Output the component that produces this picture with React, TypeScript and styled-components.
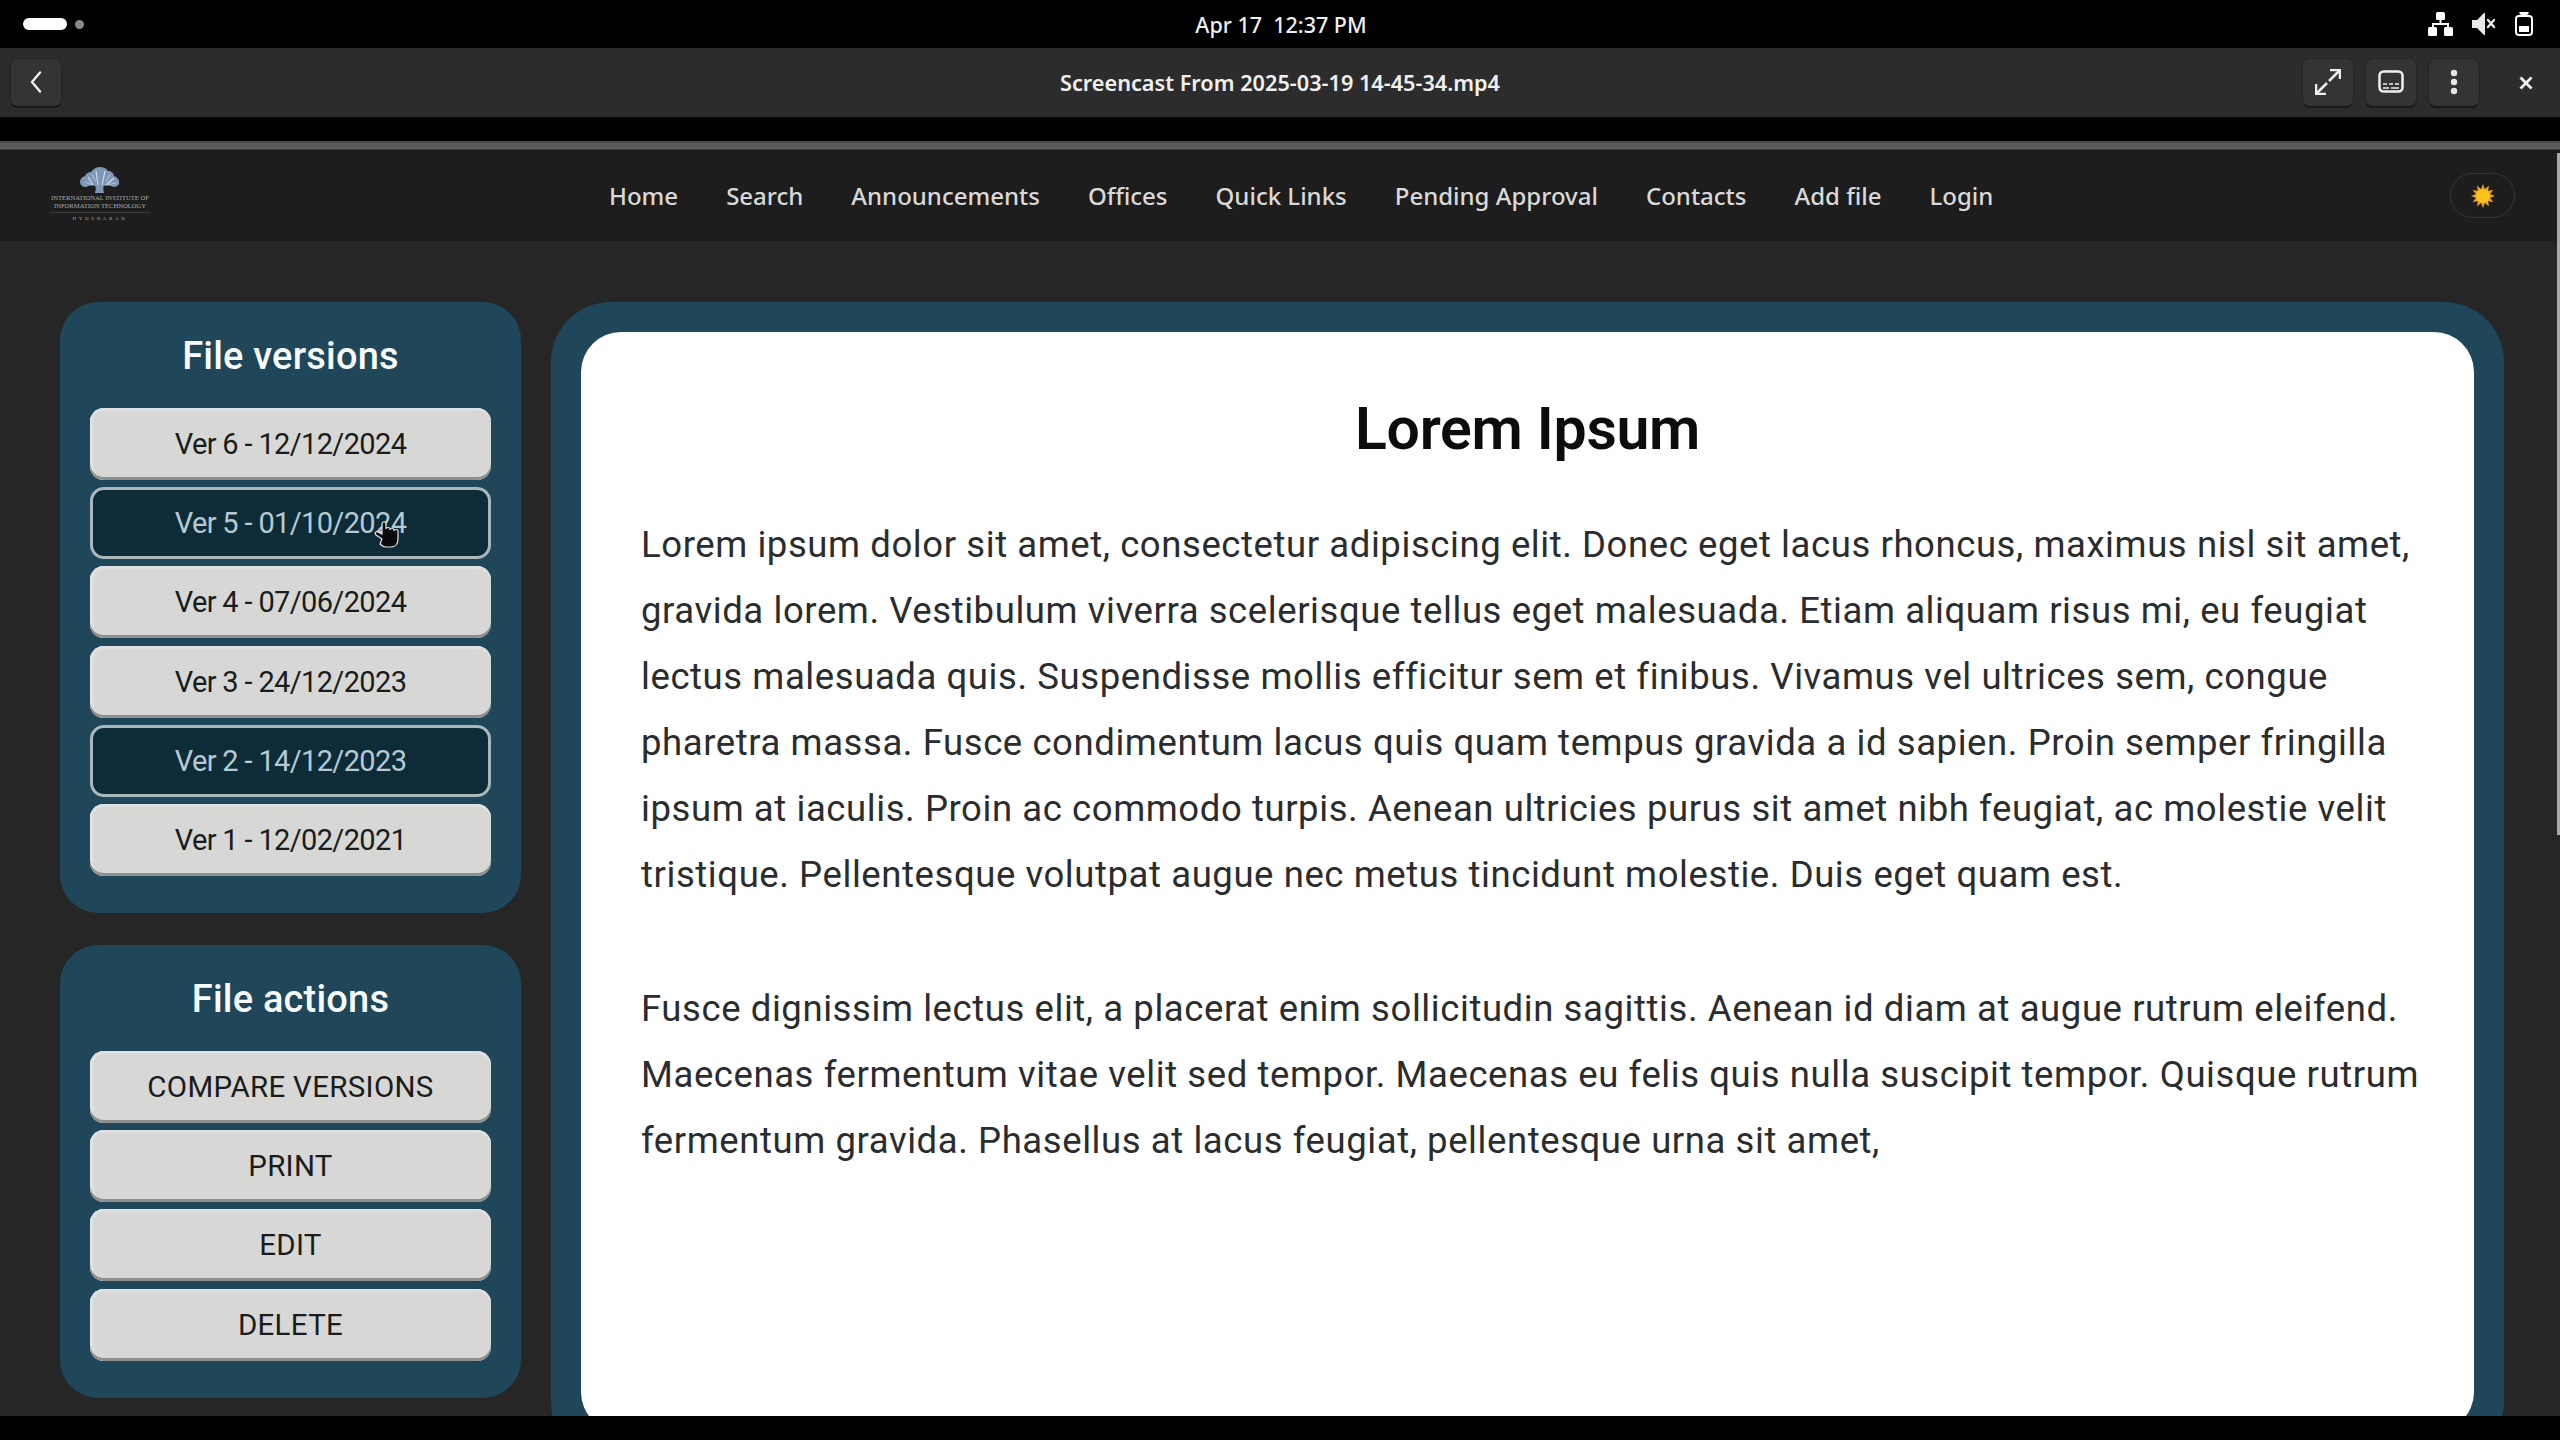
import styled, { createGlobalStyle } from 'styled-components';

const GlobalStyle = createGlobalStyle`
  html, body {
    margin: 0;
    padding: 0;
    background: #000;
  }
  * {
    box-sizing: border-box;
  }
`;

const Screen = styled.div`
  width: 2560px;
  height: 1440px;
  display: flex;
  flex-direction: column;
  overflow: hidden;
  position: relative;
  background: #000;
  font-family: Roboto, sans-serif;
`;

const TopBar = styled.div`
  height: 48px;
  flex: none;
  background: #000;
  display: grid;
  grid-template-columns: 1fr auto 1fr;
  align-items: center;
  padding: 0 23px;
  color: #efefef;
`;

const Activities = styled.div`
  display: flex;
  align-items: center;
`;

const Pill = styled.div`
  width: 44px;
  height: 12px;
  border-radius: 6px;
  background: #fff;
`;

const Dot = styled.div`
  width: 9px;
  height: 9px;
  border-radius: 50%;
  margin-left: 8px;
  background: #8a8a8a;
`;

const Clock = styled.div`
  font-family: 'Noto Sans', sans-serif;
  font-size: 21.5px;
  font-weight: 500;
  white-space: pre;
  margin-left: 2px;
`;

const Tray = styled.div`
  display: flex;
  align-items: center;
  justify-content: flex-end;
  gap: 19px;
  padding-right: 4px;
`;

const TitleBar = styled.div`
  height: 69px;
  flex: none;
  background: #2c2c2c;
  display: grid;
  grid-template-columns: 1fr auto 1fr;
  align-items: center;
  padding: 0 10px;
`;

const IconButton = styled.div`
  width: 52px;
  height: 50px;
  border-radius: 8px;
  background: #343434;
  border: 1px solid #262626;
  border-bottom: 2px solid #191919;
  display: flex;
  align-items: center;
  justify-content: center;
  flex: none;
`;

const VideoTitle = styled.div`
  color: #f0f0f0;
  font-family: 'Noto Sans', sans-serif;
  font-size: 21.7px;
  font-weight: 600;
`;

const ActionGroup = styled.div`
  display: flex;
  gap: 11px;
  align-items: center;
  justify-content: flex-end;
`;

const CloseWrap = styled.div`
  width: 22px;
  margin: 0 13px 0 24px;
  display: flex;
  justify-content: center;
`;

const Spacer = styled.div`
  height: 24px;
  flex: none;
  background: #000;
`;

const Progress = styled.div`
  height: 9px;
  flex: none;
  background: #5b5b5b;
  border-top: 2px solid #4a4a4a;
  border-bottom: 1px solid #3c3c3c;
`;

const NavBar = styled.nav`
  height: 91px;
  flex: none;
  background: #1c1d1c;
  display: flex;
  align-items: center;
  padding: 0 45px 0 50px;
`;

const Logo = styled.div`
  width: 100px;
  display: flex;
  flex-direction: column;
  align-items: center;
  color: #a9acae;
  font-family: 'Liberation Serif', serif;
  font-size: 6.6px;
  line-height: 8px;
  white-space: nowrap;
  text-align: center;
  margin-top: -3px;
`;

const LogoRule = styled.div`
  width: 100%;
  height: 1px;
  background: #3a3c3c;
  margin: 2px 0 3px;
`;

const LogoCity = styled.div`
  font-size: 5px;
  line-height: 6px;
  letter-spacing: 2.6px;
`;

const NavLinks = styled.div`
  display: flex;
  gap: 48px;
  margin-left: 459px;
`;

const NavLink = styled.a`
  color: #d9d9d9;
  font-family: 'Noto Sans', sans-serif;
  font-size: 24px;
  font-weight: 500;
  line-height: 34px;
`;

const ThemeToggle = styled.div`
  margin-left: auto;
  width: 65px;
  height: 45px;
  border-radius: 23px;
  border: 1px solid #343635;
  display: flex;
  align-items: center;
  justify-content: center;
`;

const Page = styled.div`
  flex: 1;
  min-height: 0;
  background: #252625;
  display: grid;
  grid-template-columns: 461px 1953px;
  column-gap: 30px;
  align-items: start;
  padding: 61px 0 0 60px;
  overflow: hidden;
`;

const Sidebar = styled.aside`
  display: flex;
  flex-direction: column;
  gap: 32px;
`;

const Panel = styled.section`
  background: #20465a;
  border-radius: 38px;
  padding: 0 30px 37px;
`;

const PanelTitle = styled.h2`
  margin: 0;
  height: 106px;
  line-height: 109px;
  text-align: center;
  color: #f7fbfc;
  font-size: 38px;
  font-weight: 500;
  letter-spacing: 0.2px;
`;

const ButtonList = styled.div`
  display: flex;
  flex-direction: column;
  gap: 7.2px;
`;

const SideButton = styled.button<{ $active?: boolean }>`
  position: relative;
  width: 100%;
  height: 72px;
  padding: 0;
  border-radius: 14px;
  font-family: Roboto, sans-serif;
  font-size: 29px;
  font-weight: 400;
  letter-spacing: -0.65px;
  background: ${(p) => (p.$active ? '#0e2b38' : '#d7d8d6')};
  color: ${(p) => (p.$active ? '#b5cad2' : '#1a1c1c')};
  border: ${(p) => (p.$active ? '3px solid #aab8bc' : 'none')};
  box-shadow: ${(p) =>
    p.$active ? 'none' : 'inset 0 -3px 0 #8f908e, inset 0 3px 0 #dfe0e3, inset 3px 0 2px #e2e3e3'};
`;

const ActionButton = styled(SideButton)`
  font-size: 29.5px;
  letter-spacing: 0.3px;
`;

const Cursor = styled.svg`
  position: absolute;
  left: 281px;
  top: 30px;
`;

const Viewer = styled.main`
  height: 1160px;
  background: #20465a;
  border-radius: 60px;
  padding: 30px;
`;

const Sheet = styled.article`
  height: 100%;
  background: #fff;
  border-radius: 40px;
  color: #2a2c2e;
`;

const SheetTitle = styled.h1`
  margin: 0;
  height: 118px;
  padding-top: 62px;
  line-height: 70px;
  box-sizing: content-box;
  text-align: center;
  color: #0a0c0e;
  font-size: 59px;
  font-weight: 600;
  letter-spacing: -0.3px;
`;

const Paragraph = styled.p`
  margin: 0 40px 68px 60px;
  font-size: 36.5px;
  line-height: 66px;
  letter-spacing: 0.58px;
`;

const ScrollThumb = styled.div`
  position: absolute;
  right: 0;
  top: 153px;
  width: 3px;
  height: 682px;
  background: #a8a8a8;
`;

const BottomBar = styled.div`
  height: 24px;
  flex: none;
  background: #000;
`;

const versions = [
  { label: 'Ver 6 - 12/12/2024' },
  { label: 'Ver 5 - 01/10/2024', active: true, cursor: true },
  { label: 'Ver 4 - 07/06/2024' },
  { label: 'Ver 3 - 24/12/2023' },
  { label: 'Ver 2 - 14/12/2023', active: true },
  { label: 'Ver 1 - 12/02/2021' },
];

const actions = ['COMPARE VERSIONS', 'PRINT', 'EDIT', 'DELETE'];

const links = ['Home', 'Search', 'Announcements', 'Offices', 'Quick Links', 'Pending Approval', 'Contacts', 'Add file', 'Login'];

function NetworkIcon() {
  return (
    <svg width="25" height="24" viewBox="0 0 25 24" fill="#fff">
      <rect x="8" y="0" width="9" height="8" rx="1.5" />
      <rect x="0" y="15" width="9" height="9" rx="1.5" />
      <rect x="16" y="15" width="9" height="9" rx="1.5" />
      <path d="M11.500 8h2v3H21v4h-2v-2H6v2H4v-4h7.500z" />
    </svg>
  );
}

function MutedIcon() {
  return (
    <svg width="24" height="24" viewBox="0 0 24 24" fill="#e8e8e8">
      <path d="M0 8h5l7-7h1v22h-1l-7-7H0z" />
      <path d="M16 8l6 7M22 8l-6 7" stroke="#e8e8e8" strokeWidth="2.4" strokeLinecap="round" />
    </svg>
  );
}

function BatteryIcon() {
  return (
    <svg width="18" height="24" viewBox="0 0 18 24" fill="none">
      <path d="M6 2.500V1.500h6v1" stroke="#fff" strokeWidth="3" />
      <rect x="1" y="4" width="16" height="19" rx="3" stroke="#fff" strokeWidth="2" />
      <rect x="4" y="14" width="10" height="6" fill="#fff" />
    </svg>
  );
}

function BackIcon() {
  return (
    <svg width="12" height="22" viewBox="0 0 12 22" fill="none">
      <path d="M10 1.500L2 11l8 9.500" stroke="#f0f0f0" strokeWidth="2.4" strokeLinecap="round" strokeLinejoin="round" />
    </svg>
  );
}

function ExpandIcon() {
  return (
    <svg width="26" height="26" viewBox="0 0 26 26" fill="none" stroke="#efefef" strokeWidth="2.500">
      <path d="M14 12L24 2" />
      <path d="M15 1h10v9" />
      <path d="M12 14L2 24" />
      <path d="M1 15v10h10" />
    </svg>
  );
}

function SubtitleIcon() {
  return (
    <svg width="26" height="24" viewBox="0 0 26 24" fill="none">
      <rect x="1.500" y="1.500" width="23" height="20" rx="4" stroke="#efefef" strokeWidth="2.500" />
      <path d="M5 14h4M11 14h4M17 14h4M5 18h6M13 18h8" stroke="#efefef" strokeWidth="1.500" />
    </svg>
  );
}

function MoreIcon() {
  return (
    <svg width="8" height="26" viewBox="0 0 8 26" fill="#e6e6e6">
      <circle cx="4" cy="4" r="3.200" />
      <circle cx="4" cy="13" r="3.200" />
      <circle cx="4" cy="22" r="3.200" />
    </svg>
  );
}

function CloseIcon() {
  return (
    <svg width="14" height="14" viewBox="0 0 14 14" fill="none">
      <path d="M1.500 1.500l11 11M12.500 1.500l-11 11" stroke="#f0f0f0" strokeWidth="2.800" />
    </svg>
  );
}

function SunIcon() {
  const rays = [0, 30, 60, 90, 120, 150, 180, 210, 240, 270, 300, 330];
  return (
    <svg width="24" height="24" viewBox="0 0 24 24">
      {rays.map((r) => (
        <path key={r} d="M12 0l2.200 6h-4.400z" fill="#eda624" transform={`rotate(${r} 12 12)`} />
      ))}
      <circle cx="12" cy="12" r="6.800" fill="#fdc11d" />
    </svg>
  );
}

function TreeMark() {
  return (
    <svg width="42" height="28" viewBox="0 0 42 28">
      <path
        d="M1 16c0-3 2-5 5-6 1-3 4-4 6-4 3-4 6-5 9-5 4 0 7 2 8 4 3 0 6 2 6 5 3 1 6 4 5 8-1 2-3 3-5 3-3-1-7-2-10-1-1 1-1 3 0 7h-9c1-4 1-6 0-7-3-1-7 0-9 1-3 0-6-2-6-5z"
        fill="#7f97b4"
      />
      <path d="M9 11l5 8M17 5l2 14M26 5l-3 14M35 12l-8 7" stroke="#d3dfec" strokeWidth="1.100" fill="none" />
      <path d="M6 16l7 3M13 8l3 7M31 8l-4 7M37 17l-10 2" stroke="#b5c6d9" strokeWidth="0.900" fill="none" />
    </svg>
  );
}

function HandCursor() {
  return (
    <Cursor width="26" height="28" viewBox="0 0 26 28">
      <path
        d="M8 19L2 15c-2-2 0-4 2-3l4 2V4c0-3 4-3 4 0v5c0-2 4-2 4 0v1c0-2 4-2 4 0v1c0-2 4-2 4 0v8c0 5-3 8-7 8h-5c-2 0-4-1-6-3z"
        fill="#0a0a0a"
        stroke="#e8e8e8"
        strokeWidth="1.200"
      />
    </Cursor>
  );
}

function App() {
  return (
    <Screen>
      <GlobalStyle />
      <TopBar>
        <Activities>
          <Pill />
          <Dot />
        </Activities>
        <Clock>Apr 17  12:37 PM</Clock>
        <Tray>
          <NetworkIcon />
          <MutedIcon />
          <BatteryIcon />
        </Tray>
      </TopBar>

      <TitleBar>
        <IconButton>
          <BackIcon />
        </IconButton>
        <VideoTitle>Screencast From 2025-03-19 14-45-34.mp4</VideoTitle>
        <ActionGroup>
          <IconButton>
            <ExpandIcon />
          </IconButton>
          <IconButton>
            <SubtitleIcon />
          </IconButton>
          <IconButton>
            <MoreIcon />
          </IconButton>
          <CloseWrap>
            <CloseIcon />
          </CloseWrap>
        </ActionGroup>
      </TitleBar>

      <Spacer />
      <Progress />

      <NavBar>
        <Logo>
          <TreeMark />
          <div>INTERNATIONAL INSTITUTE OF</div>
          <div>INFORMATION TECHNOLOGY</div>
          <LogoRule />
          <LogoCity>HYDERABAD</LogoCity>
        </Logo>
        <NavLinks>
          {links.map((link) => (
            <NavLink key={link}>{link}</NavLink>
          ))}
        </NavLinks>
        <ThemeToggle>
          <SunIcon />
        </ThemeToggle>
      </NavBar>

      <Page>
        <Sidebar>
          <Panel>
            <PanelTitle>File versions</PanelTitle>
            <ButtonList>
              {versions.map((v) => (
                <SideButton key={v.label} $active={v.active}>
                  {v.label}
                  {v.cursor && <HandCursor />}
                </SideButton>
              ))}
            </ButtonList>
          </Panel>
          <Panel>
            <PanelTitle>File actions</PanelTitle>
            <ButtonList>
              {actions.map((a) => (
                <ActionButton key={a}>{a}</ActionButton>
              ))}
            </ButtonList>
          </Panel>
        </Sidebar>

        <Viewer>
          <Sheet>
            <SheetTitle>Lorem Ipsum</SheetTitle>
            <Paragraph>
              Lorem ipsum dolor sit amet, consectetur adipiscing elit. Donec eget lacus rhoncus, maximus nisl sit amet,
              gravida lorem. Vestibulum viverra scelerisque tellus eget malesuada. Etiam aliquam risus mi, eu feugiat
              lectus malesuada quis. Suspendisse mollis efficitur sem et finibus. Vivamus vel ultrices sem, congue
              pharetra massa. Fusce condimentum lacus quis quam tempus gravida a id sapien. Proin semper fringilla
              ipsum at iaculis. Proin ac commodo turpis. Aenean ultricies purus sit amet nibh feugiat, ac molestie velit
              tristique. Pellentesque volutpat augue nec metus tincidunt molestie. Duis eget quam est.
            </Paragraph>
            <Paragraph>
              Fusce dignissim lectus elit, a placerat enim sollicitudin sagittis. Aenean id diam at augue rutrum eleifend.
              Maecenas fermentum vitae velit sed tempor. Maecenas eu felis quis nulla suscipit tempor. Quisque rutrum
              fermentum gravida. Phasellus at lacus feugiat, pellentesque urna sit amet,
            </Paragraph>
          </Sheet>
        </Viewer>
      </Page>

      <BottomBar />
      <ScrollThumb />
    </Screen>
  );
}

export default App;
